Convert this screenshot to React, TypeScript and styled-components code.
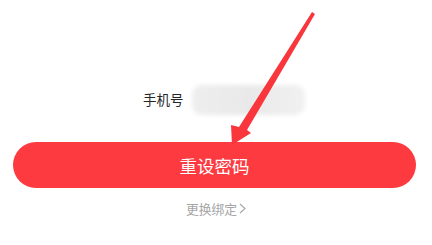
import styled, { createGlobalStyle } from "styled-components";

const GlobalStyle = createGlobalStyle`
  html, body {
    margin: 0;
    padding: 0;
    background: #ffffff;
  }
  body {
    font-family: "Noto Sans CJK SC", "Noto Sans", sans-serif;
  }
`;

export default function App() {
  return (
    <Page>
      <GlobalStyle />
      <PhoneRow>
        <Label>手机号</Label>
        <Masked />
      </PhoneRow>

      <ResetButton>重设密码</ResetButton>

      <ChangeLink>
        更换绑定
        <Chevron viewBox="0 0 7 11">
          <path d="M1 1l5 4.5-5 4.5" />
        </Chevron>
      </ChangeLink>

      <Arrow viewBox="0 0 432 245">
        <polygon points="312,12 315,14 247,130 251,133 232,145 231,125 239,127" />
      </Arrow>
    </Page>
  );
}

const Page = styled.div`
  position: relative;
  width: 432px;
  height: 245px;
  overflow: hidden;
  display: flex;
  flex-direction: column;
  padding-top: 85px;
  box-sizing: border-box;
`;

const PhoneRow = styled.div`
  display: flex;
  align-items: center;
  gap: 8px;
  padding-left: 143px;
  height: 30px;
`;

const Label = styled.span`
  font-size: 13.5px;
  color: #262626;
  line-height: 1;
`;

const Masked = styled.div`
  width: 113px;
  height: 30px;
  border-radius: 10px;
  background: linear-gradient(90deg, #eeeeee 0%, #e9e9e9 50%, #f1f1f1 100%);
  filter: blur(2px);
`;

const ResetButton = styled.button`
  margin: 27px 16px 0 13px;
  height: 46px;
  border: none;
  border-radius: 23px;
  background: #fc3a3f;
  color: #ffffff;
  font-family: "Noto Sans CJK SC", sans-serif;
  font-size: 17.5px;
  display: flex;
  align-items: center;
  justify-content: center;
  padding: 0;
`;

const ChangeLink = styled.div`
  margin-top: 13px;
  display: flex;
  align-items: center;
  justify-content: center;
  gap: 2px;
  font-size: 12.8px;
  color: #a6a6a6;
  line-height: 15px;
`;

const Chevron = styled.svg`
  width: 7px;
  height: 11px;
  fill: none;
  stroke: #a6a6a6;
  stroke-width: 1.1;
`;

const Arrow = styled.svg`
  position: absolute;
  left: 0;
  top: 0;
  width: 432px;
  height: 245px;
  pointer-events: none;

  polygon {
    fill: #f9363b;
  }
`;
